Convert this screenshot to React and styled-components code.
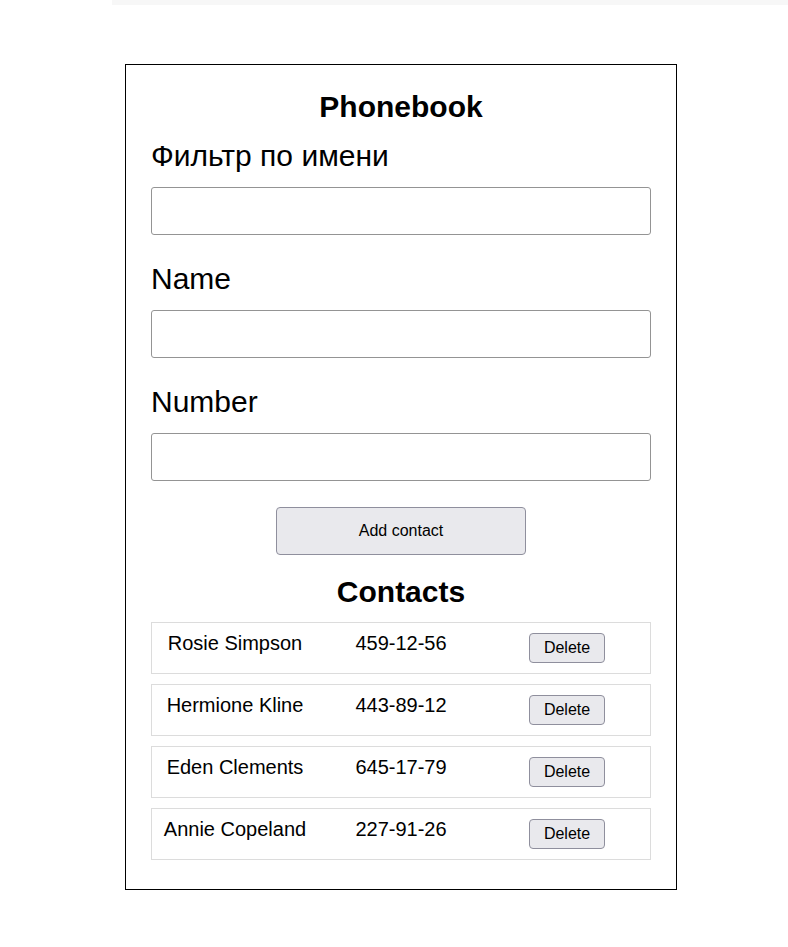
import React from 'react';
import styled, { createGlobalStyle } from 'styled-components';

const GlobalStyle = createGlobalStyle`
  body {
    margin: 0;
    background: #fff;
    font-family: "Liberation Sans", Arial, sans-serif;
    color: #000;
  }
`;

const TopBar = styled.div`
  height: 5px;
  margin-left: 112px;
  background-color: #f7f7f7;
`;

const Container = styled.div`
  width: 500px;
  margin: 59px 0 40px 125px;
  padding: 24px 25px 29px;
  border: 1px solid #000;
`;

const Title = styled.h2`
  margin: 0 0 ${(p) => p.$gap}px;
  font-size: 30px;
  font-weight: bold;
  line-height: 35px;
  text-align: center;
`;

const Form = styled.form`
  display: flex;
  flex-direction: column;
`;

const Label = styled.label`
  font-size: 30px;
  line-height: 36px;
  margin-bottom: 13px;
`;

const Input = styled.input`
  box-sizing: border-box;
  width: 100%;
  height: 48px;
  margin: 0 0 26px;
  padding: 0 10px;
  border: 1px solid #949494;
  border-radius: 3px;
  font-size: 20px;
  font-family: inherit;
`;

const AddButton = styled.button`
  align-self: center;
  width: 250px;
  height: 48px;
  margin-bottom: 19px;
  background-color: #e9e9ed;
  border: 1px solid #8f8f9d;
  border-radius: 4px;
  font-family: inherit;
  font-size: 16px;
  color: #000;
  cursor: pointer;
`;

const List = styled.ul`
  list-style: none;
  margin: 0;
  padding: 0;
  display: flex;
  flex-direction: column;
  gap: 10px;
`;

const Row = styled.li`
  display: grid;
  grid-template-columns: repeat(3, 1fr);
  align-items: start;
  padding: 10px 0;
  border: 1px solid #dcdcdc;
`;

const Cell = styled.span`
  font-size: 20px;
  line-height: 23px;
  text-align: center;
  margin-top: -1px;
`;

const DeleteButton = styled.button`
  justify-self: center;
  height: 30px;
  padding: 0 14px;
  background-color: #e9e9ed;
  border: 1px solid #8f8f9d;
  border-radius: 4px;
  font-family: inherit;
  font-size: 16px;
  color: #000;
  cursor: pointer;
`;

const contacts = [
  { id: 'id-1', name: 'Rosie Simpson', number: '459-12-56' },
  { id: 'id-2', name: 'Hermione Kline', number: '443-89-12' },
  { id: 'id-3', name: 'Eden Clements', number: '645-17-79' },
  { id: 'id-4', name: 'Annie Copeland', number: '227-91-26' },
];

export default function App() {
  return (
    <>
      <GlobalStyle />
      <TopBar />
      <Container>
        <Title $gap={14}>Phonebook</Title>
        <Form onSubmit={(e) => e.preventDefault()}>
          <Label htmlFor="filter">Фильтр по имени</Label>
          <Input id="filter" type="text" />
          <Label htmlFor="name">Name</Label>
          <Input id="name" type="text" />
          <Label htmlFor="number">Number</Label>
          <Input id="number" type="tel" />
          <AddButton type="submit">Add contact</AddButton>
        </Form>
        <Title $gap={13}>Contacts</Title>
        <List>
          {contacts.map((c) => (
            <Row key={c.id}>
              <Cell>{c.name}</Cell>
              <Cell>{c.number}</Cell>
              <DeleteButton type="button">Delete</DeleteButton>
            </Row>
          ))}
        </List>
      </Container>
    </>
  );
}
